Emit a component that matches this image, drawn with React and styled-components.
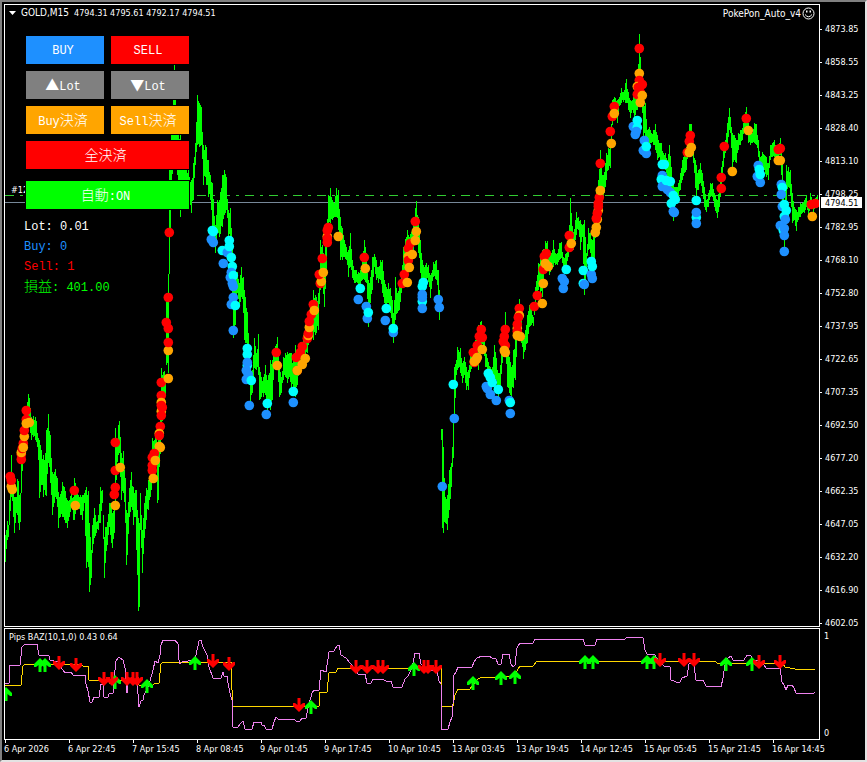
import React from 'react'
import styled, { createGlobalStyle } from 'styled-components'

const prices = [
    '4873.85', '4858.55', '4843.25', '4828.40', '4813.10', '4798.25', '4782.95', '4768.10', '4752.80', '4737.95',
    '4722.65', '4707.35', '4692.50', '4677.20', '4662.35', '4647.05', '4632.20', '4616.90', '4602.05',
]

const times = [
    '6 Apr 2026', '6 Apr 22:45', '7 Apr 15:45', '8 Apr 08:45', '9 Apr 01:45', '9 Apr 17:45', '10 Apr 10:45',
    '13 Apr 03:45', '13 Apr 19:45', '14 Apr 12:45', '15 Apr 05:45', '15 Apr 21:45', '16 Apr 14:45',
]

// x high low, one group per sampled bar
const samples = `
5 535 562,7 521 540,8 525 537,9 500 525,11 455 497,13 487 517,14 497 533,16 497 513,17 479 515,18 481 523,19 495 530,
20 493 522,21 457 493,23 440 460,25 415 445,27 402 420,28 394 420,29 398 425,31 417 440,33 416 437,35 417 440,36 421 442,
38 438 460,39 440 498,41 450 485,43 455 497,45 453 495,46 430 496,48 414 463,50 435 483,52 472 515,54 472 503,55 469 497,
57 478 507,58 492 528,60 494 517,62 482 517,64 487 520,67 500 528,69 500 517,71 492 507,73 497 520,74 478 520,77 494 503,
80 495 515,82 495 520,84 493 503,86 487 568,88 491 567,89 523 592,91 550 578,92 525 553,94 508 538,96 522 533,98 515 530,
100 487 523,102 490 503,104 537 578,105 527 563,107 522 545,109 503 527,111 503 543,112 513 548,114 507 533,115 428 503,
116 443 480,118 425 455,119 421 453,121 453 500,123 451 493,125 478 523,126 510 565,127 513 555,129 488 517,131 472 507,
133 487 525,135 490 517,136 490 550,138 518 611,139 523 607,140 493 530,142 530 573,144 503 538,146 488 520,148 480 510,
151 470 490,152 438 480,154 440 475,156 430 460,157 447 503,158 440 500,159 430 467,161 368 440,164 371 400,165 375 395,
166 302 365,168 274 373,169 165 274,171 135 190,174 65 160,177 130 175,180 135 217,183 150 185,186 170 190,188 165 200,
190 182 205,191 180 213,193 163 200,195 143 165,197 95 145,199 103 147,201 107 145,203 145 185,205 145 177,206 147 185,
208 160 197,210 175 200,212 183 227,215 225 253,217 200 233,219 200 237,222 175 227,224 170 215,226 177 210,228 210 237,
230 208 240,232 240 300,233 290 338,235 273 325,237 272 293,239 283 307,241 267 297,243 277 313,244 290 340,247 312 350,
249 350 380,250 367 403,252 370 393,254 338 368,256 353 370,258 334 375,259 367 400,261 377 397,263 377 397,265 365 395,
267 380 410,270 360 410,272 360 400,274 350 363,277 337 370,279 367 397,281 377 393,283 357 380,285 353 377,287 352 383,
289 353 377,291 353 387,293 360 393,295 345 397,297 353 385,299 350 370,303 337 357,307 323 353,310 313 333,313 290 340,
316 297 333,318 293 330,320 240 290,322 245 285,324 257 307,326 230 270,328 195 230,330 188 223,332 200 220,334 203 217,
336 188 217,338 190 230,340 217 260,342 228 260,344 240 257,346 247 260,348 250 277,350 233 267,352 260 278,354 270 283,
356 270 282,358 272 290,360 270 285,362 260 280,364 240 280,366 253 283,368 280 327,370 277 303,372 257 290,374 254 267,
376 260 280,378 267 283,380 260 280,382 260 293,384 280 303,386 287 310,388 283 303,390 288 313,392 300 327,393 313 343,
395 277 320,397 293 313,399 287 310,401 273 293,403 247 280,407 230 260,409 237 257,413 223 250,416 201 235,418 217 253,
420 240 273,422 260 300,424 267 280,426 263 280,428 265 282,430 275 298,433 262 277,436 260 280,438 270 300,439 290 320,
441 429 440,442 429 528,443 447 533,445 497 523,447 495 530,449 470 510,451 463 487,453 420 458,454 367 420,456 360 375,
457 347 370,459 352 367,460 348 373,462 363 383,464 357 375,466 367 390,468 370 390,470 355 372,474 345 365,478 325 370,
481 321 345,483 330 350,485 347 367,487 358 370,490 367 385,492 367 383,494 345 390,496 358 380,498 373 400,500 365 390,
502 340 363,505 312 347,507 350 387,509 357 393,511 367 397,513 350 388,515 337 380,517 315 340,519 299 320,521 320 343,
523 340 359,525 330 350,527 315 343,529 305 327,531 308 325,533 317 326,535 287 307,538 263 290,542 250 297,545 241 270,
547 241 265,549 257 275,551 253 268,553 240 267,555 253 265,557 253 265,559 243 260,561 242 258,563 257 273,566 253 270,
568 242 257,570 198 250,573 232 250,575 220 240,576 212 235,578 217 230,580 220 250,582 225 237,584 220 295,586 253 270,
588 228 250,590 233 253,592 240 265,594 230 260,596 190 215,598 180 200,600 150 187,602 175 205,604 172 193,606 153 180,
608 148 170,610 143 168,612 100 125,614 97 110,617 100 123,619 97 106,621 88 103,623 92 102,626 79 103,628 92 110,
630 100 118,632 100 110,634 93 117,637 90 110,639 34 100,641 80 100,643 98 137,645 103 140,647 130 143,649 127 143,
651 133 143,653 130 145,655 124 150,657 135 160,659 143 157,661 143 167,663 153 167,665 153 170,667 160 180,669 145 180,
671 167 190,673 180 221,675 187 200,678 183 197,680 173 190,682 160 180,684 153 173,686 147 170,689 124 150,691 124 150,
693 150 163,696 165 200,698 170 190,700 163 183,702 173 193,704 187 207,706 200 212,708 193 207,710 183 197,712 183 197,
714 193 207,717 200 218,719 187 207,721 167 187,723 148 167,725 140 153,727 123 147,729 108 130,730 117 133,732 133 167,
734 135 160,736 140 163,738 133 150,740 130 145,742 128 140,744 117 130,746 107 130,748 123 143,750 130 145,752 133 143,
754 123 143,756 124 145,758 140 157,760 157 170,762 152 170,764 155 170,766 157 177,768 163 180,770 145 160,772 143 157,
774 140 157,776 150 165,780 138 155,782 160 200,784 210 247,786 165 200,788 167 187,790 170 195,792 193 223,794 207 220,
796 210 231,798 207 220,800 203 217,802 203 213,804 200 213,806 195 207,808 203 218,810 193 207,813 200 213,817 195 203`
    .split(',')
    .map((group) => group.trim().split(' ').map(Number))

function buildBars() {
    let d = ''
    samples.forEach(([x, high, low], i) => {
        d += `M${x + 0.5} ${high}V${low}`
        const next = samples[i + 1]
        // 440 is the weekend gap
        if (!next || x === 439) return
        for (let k = x + 1; k < next[0]; k++) {
            const t = (k - x) / (next[0] - x)
            const top = high + (next[1] - high) * t
            const bottom = low + (next[2] - low) * t
            const trim = Math.min((bottom - top) * (((k * 7) % 5) / 22), 6)
            d += `M${k + 0.5} ${Math.round(top + trim)}V${Math.round(bottom - trim)}`
        }
    })
    return d
}

const dotColors = { R: '#ff0000', O: '#ffa500', B: '#1e90ff', C: '#00ffff' }

// color, then "x y" centres in drawing order
const dots = `
O 11 486,R 11 480,R 10 476,O 12 489,R 21 459,R 21 454,O 21 452,R 22 448,R 23 443,O 24 436,R 24 430,R 26 419,R 26 410,
O 26 423,O 29 422,O 23 447,R 74 490,O 75 505,R 115 442,R 115 470,R 115 487,R 114 494,O 120 467,O 115 505,
R 161 382,R 161 395,O 161 402,R 161 405,O 161 411,R 162 407,R 161 415,R 160 426,O 159 433,R 159 435,O 159 446,O 160 447,
R 154 453,R 152 457,R 152 465,R 152 470,O 155 460,O 153 478,O 168 378,R 169 232,R 168 297,R 166 322,R 168 328,
O 168 350,R 168 342,B 211 239,B 213 242,C 212 230,C 213 231,B 223 263,C 222 250,B 227 252,C 229 240,C 229 246,
C 231 257,C 232 266,B 231 272,B 230 277,C 233 275,B 232 283,B 233 286,B 233 297,B 231 304,C 235 305,B 233 330,
C 247 348,C 247 354,C 247 365,B 247 362,B 246 370,B 248 374,B 246 379,C 251 380,B 249 405,C 267 403,B 266 414,
R 276 352,O 277 365,C 293 391,B 293 402,R 296 357,R 300 352,R 297 370,O 297 370,O 302 364,O 305 358,R 302 346,
R 307 338,O 308 335,R 308 333,O 309 327,R 309 321,R 311 314,R 313 304,O 314 310,R 320 283,O 321 281,R 319 274,
O 323 272,R 322 258,O 327 236,R 327 242,R 327 238,R 327 230,R 328 227,O 338 236,R 364 257,O 365 268,C 360 288,
B 358 299,B 366 306,B 367 318,C 368 312,C 386 308,B 385 320,B 393 332,C 393 328,R 402 283,R 404 274,O 407 282,
R 410 243,R 408 248,O 408 256,R 408 260,O 409 267,O 412 254,R 415 221,O 415 240,O 416 231,C 422 286,C 423 282,
C 422 301,B 422 297,B 422 294,B 422 308,B 438 299,B 439 307,C 453 384,B 454 418,B 442 486,R 481 329,R 479 336,
R 482 337,R 477 345,R 473 352,R 474 362,O 474 361,O 476 359,O 477 357,O 482 349,B 486 386,B 487 388,B 490 394,
B 496 400,C 488 373,C 490 377,C 492 382,C 498 389,R 505 329,R 504 336,R 503 341,R 505 345,O 504 350,O 505 352,
R 519 308,O 519 315,R 518 317,O 517 328,R 517 324,R 517 331,O 517 335,O 520 336,B 509 400,C 510 402,B 510 413,
R 537 295,R 534 306,O 543 283,O 542 303,R 544 256,R 546 253,R 543 269,O 545 263,O 548 266,B 562 278,B 564 281,
B 563 288,C 566 269,C 583 270,C 583 283,B 584 284,B 591 274,B 592 278,C 591 261,C 592 266,R 569 235,R 569 247,
O 571 243,R 600 163,R 599 197,R 598 203,O 598 210,R 598 206,O 597 219,R 597 213,R 596 218,O 595 232,O 596 227,
O 600 190,R 612 116,R 610 131,O 611 143,R 614 106,O 614 113,R 639 48,O 639 73,R 639 80,O 637 86,R 642 84,R 638 87,
R 637 94,R 640 92,O 640 102,O 642 95,B 633 126,C 637 127,C 637 120,B 636 131,B 635 134,B 644 140,B 643 150,
B 646 153,C 646 146,C 662 164,C 664 164,B 662 175,C 661 179,B 662 186,B 667 189,C 666 180,C 670 181,B 670 192,
C 673 195,C 671 203,C 675 199,B 673 211,B 674 212,R 687 152,R 689 141,R 690 135,O 689 152,O 691 147,C 696 200,
C 696 217,B 696 212,B 696 223,R 724 146,R 721 177,R 721 188,O 732 171,R 746 118,O 748 130,B 758 165,B 757 176,
B 760 182,C 759 169,C 760 174,R 778 149,R 780 148,O 778 160,O 780 160,B 781 184,C 782 187,B 781 194,B 782 206,
C 784 204,C 786 210,C 784 216,B 785 219,B 780 225,C 783 230,B 784 228,B 784 235,B 784 251,R 811 204,R 815 203,O 812 216`
    .split(',')
    .map((group) => group.trim().split(' '))

const violetLine = `5,683 9,683 10,665 20,665 22,647 25,644 37,644 39,655 49,656 50,660 58,662 62,669 65,673 71,672 73,675 85,675
86,684 88,691 90,702 92,702 94,697 99,697 101,684 103,684 104,697 108,697 109,694 113,693 114,680 116,661 119,657 123,660
125,668 126,680 127,693 128,684 130,681 134,682 137,685 138,694 139,707 141,701 143,700 144,695 147,690 150,681 153,670
155,661 158,663 160,655 161,645 163,640 175,640 178,644 179,660 180,664 182,662 195,660 196,655 199,641 201,640 203,647
207,655 209,667 213,678 221,678 223,672 224,676 227,676 228,683 230,693 232,700 233,727 234,728 238,727 240,724 243,721
245,729 252,729 254,722 261,722 262,725 264,725 266,729 272,729 274,722 276,717 278,719 290,719 295,720 297,722 300,721
302,718 306,718 308,708 312,693 314,690 319,690 321,670 326,672 329,652 334,651 337,646 339,645 341,655 346,658 350,663
354,668 358,674 365,674 367,683 371,683 373,679 384,680 386,681 391,681 393,687 402,687 405,679 408,676 412,668 415,653
419,653 421,664 428,670 437,670 439,681 441,684 442,729 448,729 450,722 452,717 453,704 454,675 456,672 458,667 472,667
474,662 477,658 482,656 489,656 492,658 496,659 498,664 501,664 503,654 509,654 511,664 513,667 515,665 517,648 520,643
533,643 535,639 583,639 585,645 595,645 597,639 625,639 627,637 643,638 645,650 647,654 655,655 659,662 664,666 670,667
671,680 674,681 676,682 680,682 682,678 687,676 689,664 692,662 694,665 696,680 703,680 706,686 716,686 721,687 723,678
725,665 728,658 731,656 733,660 744,660 747,655 751,656 753,660 758,660 760,663 764,665 767,669 780,668 782,682 784,685
786,690 788,685 792,685 794,688 796,693 814,693 815,692`

const goldLine = `5,685 21,685 23,666 25,664 81,664 83,666 88,666 89,680 137,681 139,685 153,685 155,683 159,683 161,664 163,662
231,662 232,690 233,706 319,706 320,692 327,692 329,673 336,672 338,668 441,668 442,706 453,706 455,695 458,689 470,689
472,686 478,679 482,677 500,677 503,676 515,676 517,671 520,666 533,666 537,661 561,661 565,662 580,661 624,661 626,662
628,661 715,661 717,663 782,663 785,667 795,669 815,669`

// x and top of every signal arrow
const upArrows = [
    [6, 687], [40, 658], [45, 658], [115, 675], [147, 679], [195, 656], [311, 700], [414, 662], [473, 676],
    [501, 671], [515, 670], [585, 655], [593, 655], [647, 655], [654, 655], [726, 657], [752, 657],
]
const downArrows = [
    [59, 656], [76, 658], [104, 672], [112, 672], [127, 672], [133, 672], [137, 672], [213, 654], [229, 657],
    [299, 698], [356, 660], [367, 660], [378, 660], [383, 660], [424, 660], [428, 660], [436, 660],
    [660, 653], [684, 653], [694, 653], [759, 655], [780, 655],
]

function PriceChart() {
    return (
        <Plot viewBox="5 5 814 621" preserveAspectRatio="none" role="img" aria-label="GOLD M15">
            <g shapeRendering="crispEdges">
                <path d="M5 202.5H819" stroke="#778899" />
                <path d="M5 195.5H819" stroke="#32cd32" strokeDasharray="9 6 3 6" />
                <path d={buildBars()} stroke="#00ff00" />
            </g>
            {dots.map(([color, x, y], i) => (
                <circle key={i} cx={Number(x) + 0.3} cy={Number(y) + 0.5} r="4.8" fill={dotColors[color]} />
            ))}
            <OrderLabel x="11" y="193">#12</OrderLabel>
        </Plot>
    )
}

function PipsChart() {
    return (
        <Plot viewBox="5 629 814 110" preserveAspectRatio="none" role="img" aria-label="Pips BAZ">
            <g fill="none" shapeRendering="crispEdges">
                <polyline points={goldLine} stroke="#ffd700" />
                <polyline points={violetLine} stroke="#ee82ee" />
            </g>
            <g fill="#00ff00">
                {upArrows.map(([x, y]) => (
                    <path key={x} transform={`translate(${x} ${y})`} d="M0 0L6 6V9L4 9L1.5 7V14H-1.5V7L-4 9L-6 9V6Z" />
                ))}
            </g>
            <g fill="#ff0000">
                {downArrows.map(([x, y]) => (
                    <path key={x} transform={`translate(${x} ${y})`} d="M0 14L6 8V5L4 5L1.5 7V0H-1.5V7L-4 5L-6 5V8Z" />
                ))}
            </g>
        </Plot>
    )
}

function TradePanel() {
    return (
        <TradePanelStyled>
            <div className="buttons">
                <TradeButton $color="#1e90ff">BUY</TradeButton>
                <TradeButton $color="#ff0000">SELL</TradeButton>
                <TradeButton $color="#808080"><Wide>▲</Wide>Lot</TradeButton>
                <TradeButton $color="#808080"><Wide>▼</Wide>Lot</TradeButton>
                <TradeButton $color="#ffa500">Buy<Wide>決済</Wide></TradeButton>
                <TradeButton $color="#ffa500">Sell<Wide>決済</Wide></TradeButton>
                <TradeButton $color="#ff0000" $full><Wide>全決済</Wide></TradeButton>
            </div>
            <div className="auto">
                <TradeButton $color="#00ff00"><Wide>自動</Wide>:ON</TradeButton>
            </div>
            <StatusLine $color="#ffffff">Lot: 0.01</StatusLine>
            <StatusLine $color="#1e90ff">Buy: 0</StatusLine>
            <StatusLine $color="#ff0000">Sell: 1</StatusLine>
            <StatusLine $color="#00ff00"><Wide>損益</Wide>: 401.00</StatusLine>
        </TradePanelStyled>
    )
}

function App() {
    return (
        <Terminal>
            <GlobalStyle />
            <Pane>
                <PriceChart />
                <Caption>
                    <svg width="7" height="4" viewBox="0 0 7 4"><path d="M0 0H7L3.5 4Z" fill="#fff" /></svg>
                    <Name>GOLD,M15</Name>
                    <span>4794.31 4795.61 4792.17 4794.51</span>
                </Caption>
                <Expert>
                    <Name>PokePon_Auto_v4</Name>
                    <svg width="13" height="13" viewBox="0 0 13 13" fill="none" stroke="#fff">
                        <circle cx="6.5" cy="6.5" r="5.5" />
                        <path d="M3 7.5Q6.5 12 10 7.5" />
                        <path d="M4 4.5H5.5M7.5 4.5H9" strokeWidth="2" />
                    </svg>
                </Expert>
                <TradePanel />
            </Pane>
            <PriceAxis>
                {prices.map((price) => <li key={price}>{price}</li>)}
                <CurrentPrice>4794.51</CurrentPrice>
            </PriceAxis>
            <Pane>
                <PipsChart />
                <Caption>Pips BAZ(10,1,0) 0.43 0.64</Caption>
            </Pane>
            <PipsAxis>
                <span>1</span>
                <span>0</span>
            </PipsAxis>
            <TimeAxis>
                {times.map((time) => <li key={time}>{time}</li>)}
            </TimeAxis>
        </Terminal>
    )
}

const GlobalStyle = createGlobalStyle`
    * {
        box-sizing: border-box;
    }

    body {
        margin: 0;
        background: #000;
    }
`

const Terminal = styled.main`
    display: grid;
    grid-template-columns: minmax(0, 1fr) 45px;
    grid-template-rows: minmax(0, 1fr) 112px 19px;
    row-gap: 1px;
    height: 100vh;
    min-height: 480px;
    padding: 2px 0 0 2px;
    border: 2px solid #808080;
    border-right-color: #e3e3e3;
    border-bottom-color: #e3e3e3;
    background: #000;
    color: #fff;
    font-family: "DejaVu Sans Condensed", "DejaVu Sans", sans-serif;
    font-size: 9px;
    line-height: 12px;
`

const Pane = styled.section`
    position: relative;
    min-height: 0;
    border: 1px solid #fff;
`

const Plot = styled.svg`
    display: block;
    width: 100%;
    height: 100%;
`

const OrderLabel = styled.text`
    fill: #fff;
    font-size: 9px;
`

const Name = styled.span`
    font-size: 10px;
`

const Caption = styled.div`
    position: absolute;
    top: 2px;
    left: 4px;
    display: flex;
    align-items: center;
    gap: 5px;
    white-space: pre;
`

const Expert = styled.div`
    position: absolute;
    top: 2px;
    right: 4px;
    display: flex;
    align-items: center;
    gap: 1px;
`

const TradePanelStyled = styled.div`
    position: absolute;
    top: 31px;
    left: 19px;
    width: 165px;

    .buttons {
        display: grid;
        grid-template-columns: 1fr 1fr;
        gap: 7px;
        padding-left: 2px;
    }

    .auto {
        display: grid;
        padding: 12px 0 8px 2px;
    }
`

const TradeButton = styled.button`
    grid-column: ${(props) => (props.$full ? '1 / -1' : 'auto')};
    height: 28px;
    padding: 1px 4px 0 0;
    border: 0;
    box-shadow: 0 0 0 1px #000;
    background: ${(props) => props.$color};
    color: #fff;
    font-family: "Liberation Mono", "Noto Sans CJK JP", monospace;
    font-size: 12px;
    line-height: 16px;
`

const StatusLine = styled.div`
    color: ${(props) => props.$color};
    font-family: "Liberation Mono", "Noto Sans CJK JP", monospace;
    font-size: 12px;
    line-height: 20px;
    white-space: pre;
`

const Wide = styled.span`
    font-family: "Noto Sans CJK JP", sans-serif;
    font-size: 14px;
    font-weight: 300;
    line-height: 16px;
`

const PriceAxis = styled.ul`
    position: relative;
    display: flex;
    flex-direction: column;
    justify-content: space-between;
    margin: 0 0 -2px;
    padding: 19px 0 0;
    list-style: none;

    li {
        display: flex;
        align-items: center;
        gap: 3px;
        height: 12px;
    }

    li::before {
        content: "";
        width: 2px;
        height: 1px;
        background: #fff;
    }
`

const CurrentPrice = styled.li`
    && {
        position: absolute;
        top: 193px;
        left: 1px;
        width: 41px;
        height: 11px;
        padding-left: 4px;
        background: #fff;
        color: #000;
    }

    &&::before {
        display: none;
    }
`

const PipsAxis = styled.div`
    display: flex;
    flex-direction: column;
    justify-content: space-between;
    padding: 2px 4px 1px;
`

const TimeAxis = styled.ol`
    grid-column: 1 / -1;
    display: grid;
    grid-template-columns: repeat(12, minmax(0, 64fr)) minmax(0, 93fr);
    margin: 0;
    padding: 0;
    list-style: none;
    white-space: nowrap;

    li::before {
        content: "";
        display: block;
        width: 1px;
        height: 3px;
        margin: -1px 0 0 1px;
        background: #fff;
    }
`

export default App
